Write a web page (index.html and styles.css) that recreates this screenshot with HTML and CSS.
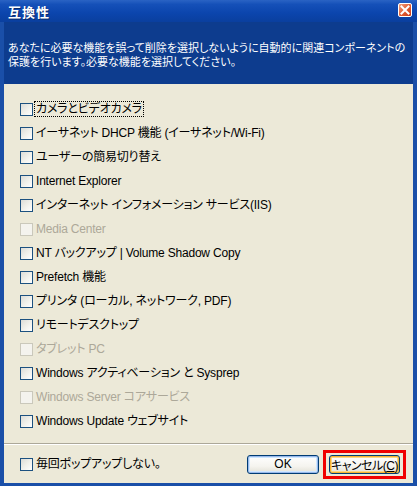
FILE: index.html
```html
<!DOCTYPE html>
<html lang="ja">
<head>
<meta charset="utf-8">
<title>互換性</title>
<link rel="stylesheet" href="styles.css">
</head>
<body>
<div class="window">
  <div class="titlebar">
    <span class="title">互換性</span>
    <span class="close"><svg width="10" height="10" viewBox="0 0 10 10"><path d="M1.5 1.5L8.5 8.5M8.5 1.5L1.5 8.5" stroke="#fff" stroke-width="2" stroke-linecap="square"/></svg></span>
  </div>
  <div class="frame">
    <div class="header">
      <p>あなたに必要な機能を誤って削除を選択しないように自動的に関連コンポーネントの<br>保護を行います。必要な機能を選択してください。</p>
    </div>
    <div class="body">
      <ul class="list">
        <li class="item"><span class="cb"></span><span class="label focus">カメラとビデオカメラ</span></li>
        <li class="item"><span class="cb"></span><span class="label">イーサネット DHCP 機能 (イーサネット/Wi-Fi)</span></li>
        <li class="item"><span class="cb"></span><span class="label">ユーザーの簡易切り替え</span></li>
        <li class="item"><span class="cb"></span><span class="label">Internet Explorer</span></li>
        <li class="item"><span class="cb"></span><span class="label">インターネット インフォメーション サービス(IIS)</span></li>
        <li class="item disabled"><span class="cb"></span><span class="label">Media Center</span></li>
        <li class="item"><span class="cb"></span><span class="label">NT バックアップ | Volume Shadow Copy</span></li>
        <li class="item"><span class="cb"></span><span class="label">Prefetch 機能</span></li>
        <li class="item"><span class="cb"></span><span class="label">プリンタ (ローカル, ネットワーク, PDF)</span></li>
        <li class="item"><span class="cb"></span><span class="label">リモートデスクトップ</span></li>
        <li class="item disabled"><span class="cb"></span><span class="label">タブレット PC</span></li>
        <li class="item"><span class="cb"></span><span class="label">Windows アクティベーション と Sysprep</span></li>
        <li class="item disabled"><span class="cb"></span><span class="label">Windows Server コアサービス</span></li>
        <li class="item"><span class="cb"></span><span class="label">Windows Update ウェブサイト</span></li>
      </ul>
      <div class="separator"></div>
      <div class="footer">
        <div class="item"><span class="cb"></span><span class="label">毎回ポップアップしない。</span></div>
        <div class="buttons">
          <button class="btn ok">OK</button>
          <div class="highlight"><button class="btn cancel">キャンセル(<u>C</u>)</button></div>
        </div>
      </div>
    </div>
  </div>
</div>
</body>
</html>
```
FILE: styles.css
```css
* { box-sizing: border-box; }
html, body { margin: 0; padding: 0; background: #ffffff; }
body {
  font-family: "Liberation Sans", "Noto Sans CJK JP", sans-serif;
  font-size: 12px;
  font-feature-settings: "palt";
  color: #000;
}
.window {
  width: 417px;
  height: 486px;
  display: flex;
  flex-direction: column;
  background: #0c3d92;
}
.titlebar {
  height: 22px;
  display: flex;
  align-items: center;
  justify-content: space-between;
  padding: 0 5px 0 8px;
  background: linear-gradient(#2a63c4 0%, #1550b8 20%, #0b45ad 60%, #0a3f9e 100%);
}
.title {
  color: #fff;
  font-weight: bold;
  font-size: 13px;
  font-family: "Noto Sans CJK JP", sans-serif;
  text-shadow: 1px 1px 0 #0a2a6a;
  letter-spacing: 1px;
}
.close {
  width: 14px;
  height: 14px;
  border: 1px solid #fff;
  border-radius: 2px;
  background: linear-gradient(135deg, #f0a080, #e05a30 55%, #c83a18);
  display: flex;
  align-items: center;
  justify-content: center;
  margin-bottom: 2px;
}
.frame {
  flex: 1;
  display: flex;
  flex-direction: column;
  padding: 0 4px 3px 4px;
  background: #1a4fa8;
}
.header {
  height: 62px;
  background: #0d3c8e;
  padding: 18px 0 0 4px;
  color: #fff;
}
.header p {
  margin: 0;
  line-height: 14px;
  font-size: 11px;
  font-family: "Noto Sans CJK JP", sans-serif;
  letter-spacing: 0;
  white-space: nowrap;
}
.body {
  flex: 1;
  background: #ece9d8;
  display: flex;
  flex-direction: column;
}
.list {
  list-style: none;
  margin: 0;
  padding: 13px 0 0 16px;
}
.item {
  height: 24px;
  display: flex;
  align-items: center;
  gap: 2px;
}
.cb {
  width: 13px;
  height: 13px;
  border: 1px solid #1c5180;
  background: linear-gradient(135deg, #dcdcd7 0%, #f0f0ea 50%, #ffffff 100%);
  flex: none;
}
.label {
  padding: 0 1px;
  font-size: 12px;
  line-height: 14px;
  letter-spacing: -0.2px;
}
.focus {
  outline: 1px dotted #000;
  outline-offset: 0;
}
.disabled .cb {
  border-color: #cac8bb;
  background: #f4f3ee;
}
.disabled .label { color: #aca899; }
.separator {
  margin: 10px 0 0 0;
  height: 2px;
  border-top: 1px solid #aca899;
  border-bottom: 1px solid #ffffff;
}
.footer {
  flex: 1;
  display: flex;
  align-items: center;
  justify-content: space-between;
  padding: 0 7px 0 16px;
}
.buttons {
  display: flex;
  align-items: center;
  gap: 4px;
}
.btn {
  height: 19px;
  border: 1px solid #003c74;
  border-radius: 3px;
  background: linear-gradient(#ffffff 0%, #f5f4ef 60%, #e3e1d6 100%);
  font-family: "Liberation Sans", "Noto Sans CJK JP", sans-serif;
  font-size: 12px;
  font-feature-settings: "palt";
  padding: 0;
  color: #000;
}
.ok {
  width: 72px;
  box-shadow: inset 0 0 0 1px #98b8ea, inset 0 0 0 2px #cee7ff;
}
.highlight {
  border: 3px solid #f00000;
  padding: 2px 3px;
}
.cancel {
  width: 71px;
  box-shadow: inset 0 0 0 1px #f8b330, inset 0 0 0 2px #fdd889;
  letter-spacing: -0.5px;
}
```
